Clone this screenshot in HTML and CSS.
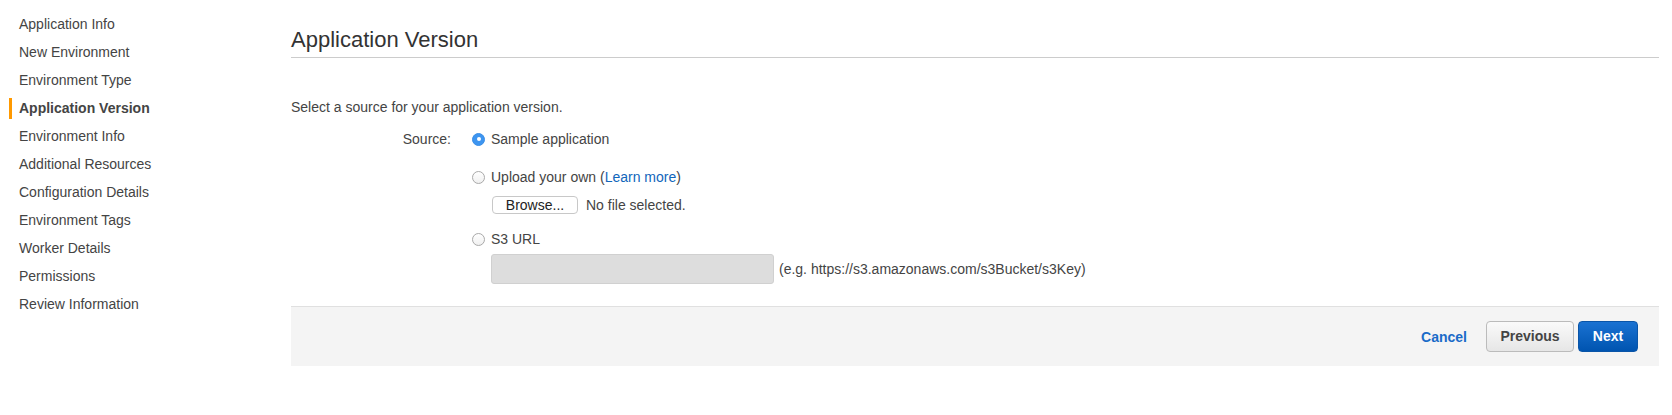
FILE: index.html
```html
<!doctype html>
<html lang="en">
  <head>
    <meta charset="UTF-8" />
    <title>Create New Environment - Application Version</title>
    <link rel="stylesheet" href="styles.css">
  </head>
  <body>
    <div class="page">
      <ul class="steps">
        <li>Application Info</li>
        <li>New Environment</li>
        <li>Environment Type</li>
        <li class="active">Application Version</li>
        <li>Environment Info</li>
        <li>Additional Resources</li>
        <li>Configuration Details</li>
        <li>Environment Tags</li>
        <li>Worker Details</li>
        <li>Permissions</li>
        <li>Review Information</li>
      </ul>
      <div class="main">
        <h1>Application Version</h1>
        <p class="intro">Select a source for your application version.</p>
        <div class="source">
          <div class="label">Source:</div>
          <div class="options">
            <div class="option sample">
              <span class="radio checked"></span>
              Sample application
            </div>
            <div class="option upload">
              <span class="radio"></span>
              Upload your own (<a href="#">Learn more</a>)
            </div>
            <div class="file">
              <button class="browse">Browse...</button>
              <span>No file selected.</span>
            </div>
            <div class="option s3">
              <span class="radio"></span>
              S3 URL
            </div>
            <div class="url">
              <input type="text" disabled />
              <span>(e.g. https://s3.amazonaws.com/s3Bucket/s3Key)</span>
            </div>
          </div>
        </div>
        <div class="footer">
          <a href="#" class="cancel">Cancel</a>
          <button class="btn previous">Previous</button>
          <button class="btn next">Next</button>
        </div>
      </div>
    </div>
  </body>
</html>
```

FILE: styles.css
```css
body {
  font-family: "Liberation Sans", Arial, sans-serif;
  font-size: 14px;
  line-height: 20px;
  color: #444;
  margin: 0;
  padding: 0;
  background-color: #fff;
}

* {
  box-sizing: border-box;
}

.page {
  display: flex;
}

.steps {
  list-style: none;
  margin: 0;
  padding: 14px 0 0 9px;
  width: 291px;
  flex-shrink: 0;
  display: flex;
  flex-direction: column;
  gap: 7px;
}
.steps li {
  line-height: 21px;
  padding-left: 7px;
  border-left: 3px solid transparent;
}
.steps li.active {
  font-weight: bold;
  border-left-color: #f90;
}

.main {
  flex: 1;
  margin-right: 13px;
}
.main h1 {
  font-size: 22px;
  font-weight: normal;
  line-height: 26px;
  color: #333;
  margin: 27px 0 0 0;
  padding-bottom: 4px;
  border-bottom: 1px solid #ccc;
}
.intro {
  margin: 39px 0 0 0;
}

.source {
  display: grid;
  grid-template-columns: 160px 1fr;
  column-gap: 21px;
  margin-top: 12px;
}
.source .label {
  text-align: right;
}
.options {
  display: flex;
  flex-direction: column;
  align-items: flex-start;
}
.option {
  display: flex;
  align-items: center;
}
.option.upload {
  margin-top: 18px;
}
.option.s3 {
  margin-top: 15px;
}
.option a {
  color: #1166bb;
  text-decoration: none;
}
.radio {
  width: 13px;
  height: 13px;
  border-radius: 50%;
  border: 1px solid #a9a9a9;
  background: linear-gradient(#fff, #f0f0f0);
  margin-right: 6px;
  display: flex;
  align-items: center;
  justify-content: center;
}
.radio.checked {
  border-color: #3a8ee6;
  background: #3d95f0;
}
.radio.checked::after {
  content: "";
  width: 4px;
  height: 4px;
  border-radius: 50%;
  background-color: #fff;
}

.file {
  display: flex;
  align-items: center;
  gap: 8px;
  height: 18px;
  line-height: 18px;
  margin: 9px 0 0 20px;
}
.browse {
  font-family: inherit;
  font-size: 14px;
  color: #222;
  height: 18px;
  width: 86px;
  padding: 0;
  line-height: 16px;
  background-color: #fff;
  border: 1px solid #c8c8c8;
  border-radius: 4px;
}

.url {
  display: flex;
  align-items: center;
  gap: 5px;
  margin: 5px 0 0 19px;
}
.url input {
  width: 283px;
  height: 30px;
  background-color: #ddd;
  border: 1px solid #d0d0d0;
  border-radius: 3px;
  margin: 0;
}

.footer {
  display: flex;
  align-items: center;
  justify-content: flex-end;
  gap: 4px;
  margin-top: 22px;
  height: 60px;
  padding-right: 21px;
  background-color: #f4f4f4;
  border-top: 1px solid #e0e0e0;
}
.footer .cancel {
  font-weight: bold;
  color: #1a6bc8;
  text-decoration: none;
  margin-right: 15px;
}
.btn {
  font-family: inherit;
  font-size: 14px;
  font-weight: bold;
  height: 31px;
  line-height: 29px;
  border-radius: 4px;
  cursor: pointer;
}
.btn.previous {
  color: #444;
  width: 88px;
  padding: 0;
  border: 1px solid #bbb;
  background: linear-gradient(#fafafa, #e6e6e6);
}
.btn.next {
  color: #fff;
  width: 60px;
  padding: 0;
  border: 1px solid #0a55a8;
  background: linear-gradient(#1a72d2, #0054b0);
}
```
